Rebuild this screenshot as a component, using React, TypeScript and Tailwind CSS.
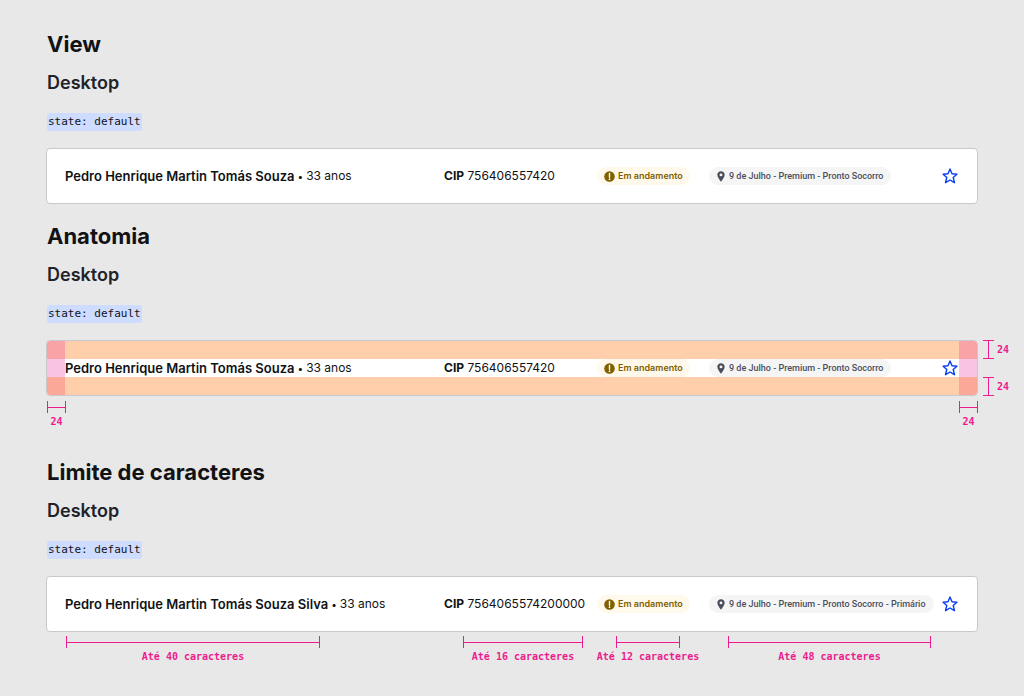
import clsx from "clsx"
import type { ReactNode } from "react"

const rowColumns =
  "grid grid-cols-[minmax(0,379fr)_minmax(0,153fr)_minmax(0,112fr)_minmax(0,232fr)_18px] items-center"

// ── Icons ──────────────────────────────────────────────────

function AlertIcon() {
  return (
    <svg viewBox="0 0 24 24" className="size-[11px] shrink-0" aria-hidden="true">
      <circle cx="12" cy="12" r="11.5" fill="#806000" />
      <path d="M12 5.500v8" stroke="#fff" strokeWidth="3" strokeLinecap="round" />
      <circle cx="12" cy="17.800" r="1.900" fill="#fff" />
    </svg>
  )
}

function PinIcon() {
  return (
    <svg viewBox="0 0 24 32" className="h-[11px] w-[8px] shrink-0" aria-hidden="true">
      <path
        fill="#4b4d5a"
        fillRule="evenodd"
        d="M12 0C5.400 0 1 4.800 1 11c0 7.500 11 21 11 21s11-13.500 11-21C23 4.800 18.600 0 12 0Zm0 7a4.300 4.300 0 1 1 0 8.600 4.300 4.300 0 0 1 0-8.600Z"
      />
    </svg>
  )
}

function StarIcon() {
  return (
    <svg
      viewBox="0 0 18 18"
      className="size-[18px]"
      fill="none"
      stroke="#0a3cf5"
      strokeWidth="1.4"
      strokeLinejoin="round"
      aria-hidden="true"
    >
      <path d="M9 2 11 6.800 15.900 7.200 12.200 10.500 13.500 15.700 9 13 4.500 15.700 5.800 10.500 2.100 7.200 7 6.800Z" />
    </svg>
  )
}

// ── Measuring marks ────────────────────────────────────────

function RulerX({ label, className }: { label: string; className: string }) {
  return (
    <div className={clsx("flex flex-col items-center", className)}>
      <div className="flex h-3 w-full items-center border-x border-[#ec1c8e]">
        <div className="h-px w-full bg-[#ec1c8e]" />
      </div>
      <span className="mt-[2px] font-['DejaVu_Sans_Mono',monospace] text-[10px] leading-[14px] font-bold whitespace-nowrap text-[#ec1c8e]">
        {label}
      </span>
    </div>
  )
}

function RulerY({ label }: { label: string }) {
  return (
    <div className="flex h-[19px] items-center gap-[3px]">
      <div className="flex h-full w-[11px] justify-center border-y border-[#ec1c8e]">
        <div className="h-full w-px bg-[#ec1c8e]" />
      </div>
      <span className="font-['DejaVu_Sans_Mono',monospace] text-[10px] leading-[14px] font-bold text-[#ec1c8e]">
        {label}
      </span>
    </div>
  )
}

// ── Patient row ────────────────────────────────────────────

type Patient = {
  name: string
  age: string
  cip: string
  place: string
}

const patient: Patient = {
  name: "Pedro Henrique Martin Tomás Souza",
  age: "33 anos",
  cip: "756406557420",
  place: "9 de Julho - Premium - Pronto Socorro",
}

const longPatient: Patient = {
  name: "Pedro Henrique Martin Tomás Souza Silva",
  age: "33 anos",
  cip: "7564065574200000",
  place: "9 de Julho - Premium - Pronto Socorro - Primário",
}

function PatientRow({ name, age, cip, place, spacing = false }: Patient & { spacing?: boolean }) {
  return (
    <div className="relative min-w-0 flex-1 overflow-hidden rounded-[4px] border border-[#c8c9cc] bg-white">
      {spacing && (
        <div className="absolute inset-0 grid grid-cols-[18px_1fr_18px] grid-rows-[18px_1fr_18px]">
          <div className="bg-[#faa3a6]" />
          <div className="bg-[#ffcfab]" />
          <div className="bg-[#faa3a6]" />
          <div className="bg-[#f9c4e4]" />
          <div />
          <div className="bg-[#f9c4e4]" />
          <div className="bg-[#fca898]" />
          <div className="bg-[#ffcfab]" />
          <div className="bg-[#fca898]" />
        </div>
      )}
      <div className={clsx(rowColumns, "relative px-[18px] py-[17px] text-[12px] leading-5 text-[#111214]")}>
        <p className="flex items-center gap-[3px] whitespace-nowrap">
          <strong className="text-[13px] font-semibold">{name}</strong>
          <span className="text-[10px]">•</span>
          <span>{age}</span>
        </p>
        <p className="whitespace-nowrap">
          <strong className="font-bold">CIP</strong> {cip}
        </p>
        <span className="flex h-[18px] items-center gap-[3px] justify-self-start rounded-full bg-[#fff9eb] px-[7px] text-[9px] font-semibold whitespace-nowrap text-[#806000]">
          <AlertIcon />
          Em andamento
        </span>
        <span className="flex h-[18px] items-center gap-1 justify-self-start rounded-full bg-[#f5f5f6] px-2 font-['Roboto',sans-serif] text-[9px] font-medium whitespace-nowrap text-[#4b4d5a]">
          <PinIcon />
          {place}
        </span>
        <button type="button" aria-label="Favoritar" className="size-[18px]">
          <StarIcon />
        </button>
      </div>
    </div>
  )
}

// ── Section ────────────────────────────────────────────────

function Section({ title, children }: { title: string; children: ReactNode }) {
  return (
    <section>
      <h2 className="pl-px text-[22px] leading-8 font-bold text-[#111214]">{title}</h2>
      <h3 className="mt-[11px] pl-px text-[18px] leading-6 font-semibold text-[#212329]">Desktop</h3>
      <code className="mt-[18px] mb-[17px] ml-px block h-[18px] w-fit rounded-[2px] bg-[#cddcff] px-px font-['DejaVu_Sans_Mono',monospace] text-[11px] leading-[18px] text-[#111214]">
        state: default
      </code>
      {children}
    </section>
  )
}

export default function App() {
  return (
    <main className="min-h-screen bg-[#e8e8e8] pt-7 pb-8 pl-[46px] font-['Inter',sans-serif]">
      <Section title="View">
        <div className="mb-4 flex pr-[46px]">
          <PatientRow {...patient} />
        </div>
      </Section>

      <Section title="Anatomia">
        <div className="flex">
          <PatientRow {...patient} spacing />
          <div className="flex w-[46px] flex-col justify-between pl-[5px]">
            <RulerY label="24" />
            <RulerY label="24" />
          </div>
        </div>
        <div className="mt-[5px] mb-[27px] flex justify-between pr-[46px] pl-px">
          <RulerX label="24" className="w-[19px]" />
          <RulerX label="24" className="w-[19px]" />
        </div>
      </Section>

      <Section title="Limite de caracteres">
        <div className="flex pr-[46px]">
          <PatientRow {...longPatient} />
        </div>
        <div className={clsx(rowColumns, "mt-[4px] mr-[46px] px-[19px]")}>
          <RulerX label="Até 40 caracteres" className="ml-px w-[254px]" />
          <RulerX label="Até 16 caracteres" className="ml-[19px] w-[120px]" />
          <RulerX label="Até 12 caracteres" className="ml-[19px] w-[64px]" />
          <RulerX label="Até 48 caracteres" className="ml-[19px] w-[203px]" />
        </div>
      </Section>
    </main>
  )
}
